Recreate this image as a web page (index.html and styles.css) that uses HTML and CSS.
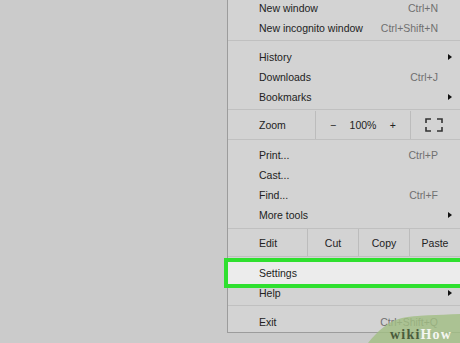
FILE: index.html
```html
<!DOCTYPE html>
<html lang="en">
<head>
    <meta charset="UTF-8">
    <title>Chrome menu - Settings</title>
    <link rel="stylesheet" href="styles.css">
</head>
<body>
    <div class="menu">
        <div class="group first">
            <div class="item"><span>New window</span><span class="key">Ctrl+N</span></div>
            <div class="item"><span>New incognito window</span><span class="key">Ctrl+Shift+N</span></div>
        </div>
        <div class="group">
            <div class="item"><span>History</span><span class="arrow"></span></div>
            <div class="item"><span>Downloads</span><span class="key">Ctrl+J</span></div>
            <div class="item"><span>Bookmarks</span><span class="arrow"></span></div>
        </div>
        <div class="split zoom-row">
            <div class="cell label zoom-label">Zoom</div>
            <div class="cell zoom-ctrl">
                <span>&minus;</span>
                <span>100%</span>
                <span>+</span>
            </div>
            <div class="cell full">
                <svg width="18" height="14" viewBox="0 0 18 14">
                    <path d="M1 5V1h5M12 1h5v4M17 9v4h-5M6 13H1V9" fill="none" stroke="#333" stroke-width="1.6"/>
                </svg>
            </div>
        </div>
        <div class="group tools">
            <div class="item"><span>Print...</span><span class="key">Ctrl+P</span></div>
            <div class="item"><span>Cast...</span></div>
            <div class="item"><span>Find...</span><span class="key">Ctrl+F</span></div>
            <div class="item"><span>More tools</span><span class="arrow"></span></div>
        </div>
        <div class="split edit-row">
            <div class="cell label edit-label">Edit</div>
            <div class="cell btn">Cut</div>
            <div class="cell btn">Copy</div>
            <div class="cell btn last">Paste</div>
        </div>
        <div class="group">
            <div class="item settings"><span>Settings</span></div>
            <div class="item"><span>Help</span><span class="arrow"></span></div>
        </div>
        <div class="group last-group">
            <div class="item"><span>Exit</span><span class="key">Ctrl+Shift+Q</span></div>
        </div>
    </div>

    <div class="watermark">
        <svg width="92" height="34" viewBox="0 0 92 34">
            <path d="M0 34 C10 22 20 12 34 9 C48 6 70 6 92 5 V34 Z" fill="#a2bf84"/>
        </svg>
        <div class="wm-text"><span class="wiki">wiki</span><span class="how">How</span></div>
    </div>
</body>
</html>
```

FILE: styles.css
```css
body {
    margin: 0;
    padding: 0;
    background-color: #cbcbcb;
    font-family: "Liberation Sans", Arial, sans-serif;
    font-size: 10.5px;
    color: #222;
    overflow: hidden;
    height: 343px;
}
.menu {
    margin-left: 227px;
    margin-top: -2px;
    background-color: #d3d3d3;
    border-left: 1px solid #9c9c9c;
    border-bottom: 1px solid #9c9c9c;
}
.group {
    padding: 6px 0 2px;
    border-bottom: 1px solid #c0c0c0;
}
.group.first {
    padding-top: 0;
}
.group.tools {
    padding: 5px 0 3px;
}
.group.last-group {
    border-bottom: none;
    padding: 6px 0 0;
}
.item {
    height: 20px;
    display: flex;
    align-items: center;
    justify-content: space-between;
    padding: 0 22px 0 31px;
    position: relative;
}
.key {
    color: #707070;
}
.arrow {
    position: absolute;
    right: 8px;
    top: 7px;
    width: 0;
    height: 0;
    border-top: 3px solid transparent;
    border-bottom: 3px solid transparent;
    border-left: 4px solid #111;
}
.settings {
    height: 22px;
    margin-top: -1px;
    margin-bottom: -1px;
    background-color: #ececec;
    outline: 4px solid #2fe02f;
    z-index: 1;
}
.split {
    display: flex;
    border-bottom: 1px solid #c0c0c0;
}
.zoom-row {
    height: 28px;
    padding-top: 1px;
}
.edit-row {
    height: 27px;
}
.cell {
    display: flex;
    align-items: center;
    justify-content: center;
    border-right: 1px solid #bcbcbc;
}
.label {
    justify-content: flex-start;
    padding-left: 31px;
    box-sizing: border-box;
}
.zoom-label {
    width: 88px;
}
.zoom-ctrl {
    width: 95px;
    justify-content: space-between;
    padding: 0 14px;
    box-sizing: border-box;
}
.full {
    flex: 1;
    border-right: none;
    padding-right: 4px;
}
.edit-label {
    width: 80px;
}
.btn {
    width: 50px;
}
.btn.last {
    flex: 1;
    border-right: none;
}
.watermark {
    position: absolute;
    right: 0;
    bottom: 0;
    width: 92px;
    height: 34px;
}
.watermark svg {
    display: block;
    opacity: 0.8;
}
.wm-text {
    position: absolute;
    left: 22px;
    top: 19px;
    line-height: 14px;
    font-family: "Liberation Serif", "DejaVu Serif", serif;
    font-weight: bold;
    font-size: 14px;
    letter-spacing: 1.2px;
}
.wiki {
    color: #4a5c3c;
}
.how {
    color: #f4f6f0;
}
```
